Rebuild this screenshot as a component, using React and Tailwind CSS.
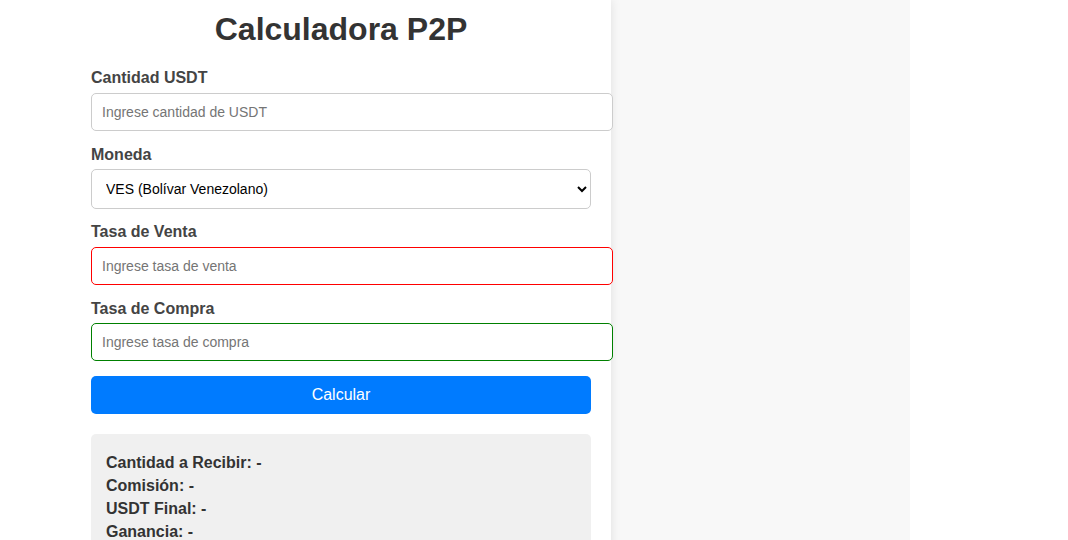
import { useState } from 'react'

export default function App() {
  const [usdt, setUsdt] = useState('')
  const [moneda, setMoneda] = useState('VES')
  const [venta, setVenta] = useState('')
  const [compra, setCompra] = useState('')

  const input =
    'block w-[522px] h-[38px] px-[10px] border rounded-[5px] bg-white text-[14px] text-black placeholder:text-[#757575] outline-none'
  const label = 'block text-[16px] leading-[18px] font-bold text-[#444] pt-[2px]'

  return (
    <div className="flex min-h-screen bg-white font-['Liberation_Sans',Arial,sans-serif]">
      <div className="relative z-10 w-[611px] shrink-0 bg-white pt-[11px] pl-[91px] pr-[20px] shadow-[0_0_10px_rgba(0,0,0,0.1)]">
        <h1 className="text-center text-[32px] leading-[37px] font-bold text-[#333] mb-[19px]">Calculadora P2P</h1>

        <label className={`${label} mb-[6px]`}>Cantidad USDT</label>
        <input
          type="number"
          value={usdt}
          onChange={e => setUsdt(e.target.value)}
          placeholder="Ingrese cantidad de USDT"
          className={`${input} border-[#ccc] mb-[13px]`}
        />

        <label className={`${label} mb-[5px]`}>Moneda</label>
        <select
          value={moneda}
          onChange={e => setMoneda(e.target.value)}
          className="block w-[500px] h-[40px] px-[10px] border border-[#ccc] rounded-[5px] bg-white text-[14px] text-black mb-[12px]"
        >
          <option value="VES">VES (Bolívar Venezolano)</option>
          <option value="COP">COP (Peso Colombiano)</option>
          <option value="ARS">ARS (Peso Argentino)</option>
        </select>

        <label className={`${label} mb-[6px]`}>Tasa de Venta</label>
        <input
          type="number"
          value={venta}
          onChange={e => setVenta(e.target.value)}
          placeholder="Ingrese tasa de venta"
          className={`${input} border-[#f00] mb-[13px]`}
        />

        <label className={`${label} mb-[5px]`}>Tasa de Compra</label>
        <input
          type="number"
          value={compra}
          onChange={e => setCompra(e.target.value)}
          placeholder="Ingrese tasa de compra"
          className={`${input} border-[#008000] mb-[15px]`}
        />

        <button
          type="button"
          className="block w-[500px] h-[38px] rounded-[5px] bg-[#007bff] text-white text-[16px] mb-[20px]"
        >
          Calcular
        </button>

        <div className="w-[500px] bg-[#f0f0f0] rounded-[5px] pt-[17px] pb-[16px] px-[15px] text-[16px] leading-[23px] font-bold text-[#333]">
          <p>Cantidad a Recibir: -</p>
          <p>Comisión: -</p>
          <p>USDT Final: -</p>
          <p>Ganancia: -</p>
        </div>
      </div>
      <div className="w-[299px] shrink-0 bg-[#f8f8f8]" />
      <div className="flex-1 bg-white" />
    </div>
  )
}
